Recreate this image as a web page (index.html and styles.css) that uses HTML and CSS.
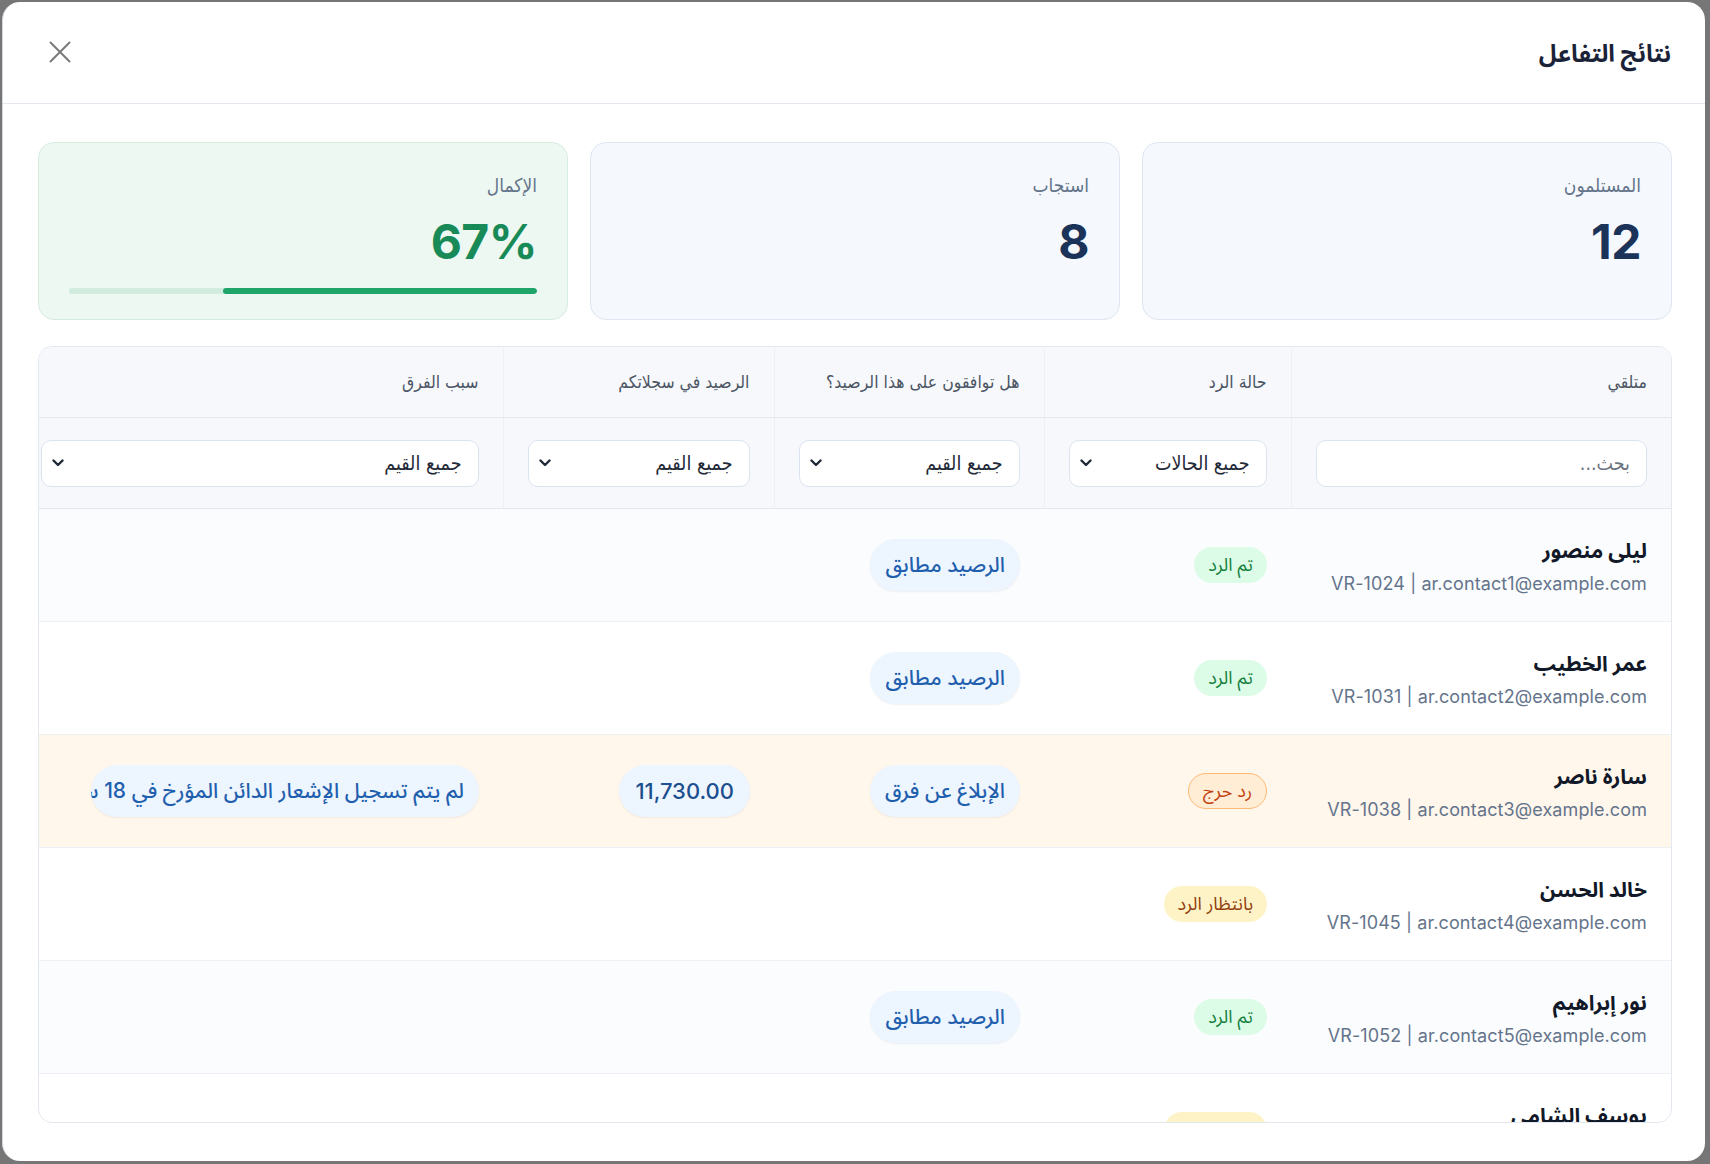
FILE: index.html
```html
<!DOCTYPE html>
<html lang="ar" dir="rtl">
<head>
<meta charset="utf-8">
<title>نتائج التفاعل</title>
<link rel="stylesheet" href="styles.css">
</head>
<body>
<div class="modal">
  <header class="modal-head">
    <h1 class="modal-title">نتائج التفاعل</h1>
    <button class="close" aria-label="إغلاق">
      <svg width="22" height="22" viewBox="0 0 22 22"><path d="M1.5 1.5L20.5 20.5M20.5 1.5L1.5 20.5" stroke="#7a7a7a" stroke-width="2" fill="none" stroke-linecap="round"/></svg>
    </button>
  </header>

  <section class="stats">
    <div class="stat">
      <div class="stat-label">المستلمون</div>
      <div class="stat-value">12</div>
    </div>
    <div class="stat">
      <div class="stat-label">استجاب</div>
      <div class="stat-value">8</div>
    </div>
    <div class="stat stat-green">
      <div class="stat-label">الإكمال</div>
      <div class="stat-value green">67%</div>
      <div class="bar"><div class="bar-fill" style="width:67%"></div></div>
    </div>
  </section>

  <section class="table-wrap">
    <table class="grid">
      <colgroup>
        <col class="c1"><col class="c2"><col class="c3"><col class="c4"><col class="c5">
      </colgroup>
      <thead>
        <tr class="head-row">
          <th>متلقي</th>
          <th>حالة الرد</th>
          <th>هل توافقون على هذا الرصيد؟</th>
          <th>الرصيد في سجلاتكم</th>
          <th class="last">سبب الفرق</th>
        </tr>
        <tr class="filter-row">
          <th><div class="field placeholder">بحث...</div></th>
          <th><div class="field select"><span>جميع الحالات</span><svg class="chev" width="12" height="8" viewBox="0 0 12 8"><path d="M1.5 1.5L6 6l4.5-4.5" stroke="#1f2937" stroke-width="2.4" fill="none" stroke-linecap="round" stroke-linejoin="round"/></svg></div></th>
          <th><div class="field select"><span>جميع القيم</span><svg class="chev" width="12" height="8" viewBox="0 0 12 8"><path d="M1.5 1.5L6 6l4.5-4.5" stroke="#1f2937" stroke-width="2.4" fill="none" stroke-linecap="round" stroke-linejoin="round"/></svg></div></th>
          <th><div class="field select"><span>جميع القيم</span><svg class="chev" width="12" height="8" viewBox="0 0 12 8"><path d="M1.5 1.5L6 6l4.5-4.5" stroke="#1f2937" stroke-width="2.4" fill="none" stroke-linecap="round" stroke-linejoin="round"/></svg></div></th>
          <th class="last"><div class="field select"><span>جميع القيم</span><svg class="chev" width="12" height="8" viewBox="0 0 12 8"><path d="M1.5 1.5L6 6l4.5-4.5" stroke="#1f2937" stroke-width="2.4" fill="none" stroke-linecap="round" stroke-linejoin="round"/></svg></div></th>
        </tr>
      </thead>
      <tbody>
        <tr class="row alt">
          <td class="who"><div class="name">ليلى منصور</div><div class="sub">VR-1024 | ar.contact1@example.com</div></td>
          <td><span class="badge ok">تم الرد</span></td>
          <td><span class="pill">الرصيد مطابق</span></td>
          <td></td>
          <td class="last"></td>
        </tr>
        <tr class="row">
          <td class="who"><div class="name">عمر الخطيب</div><div class="sub">VR-1031 | ar.contact2@example.com</div></td>
          <td><span class="badge ok">تم الرد</span></td>
          <td><span class="pill">الرصيد مطابق</span></td>
          <td></td>
          <td class="last"></td>
        </tr>
        <tr class="row warn">
          <td class="who"><div class="name">سارة ناصر</div><div class="sub">VR-1038 | ar.contact3@example.com</div></td>
          <td><span class="badge crit">رد حرج</span></td>
          <td><span class="pill">الإبلاغ عن فرق</span></td>
          <td><span class="pill num">11,730.00</span></td>
          <td class="last"><span class="pill reason">لم يتم تسجيل الإشعار الدائن المؤرخ في 18 سبتمبر 2024</span></td>
        </tr>
        <tr class="row">
          <td class="who"><div class="name">خالد الحسن</div><div class="sub">VR-1045 | ar.contact4@example.com</div></td>
          <td><span class="badge wait">بانتظار الرد</span></td>
          <td></td>
          <td></td>
          <td class="last"></td>
        </tr>
        <tr class="row alt">
          <td class="who"><div class="name">نور إبراهيم</div><div class="sub">VR-1052 | ar.contact5@example.com</div></td>
          <td><span class="badge ok">تم الرد</span></td>
          <td><span class="pill">الرصيد مطابق</span></td>
          <td></td>
          <td class="last"></td>
        </tr>
        <tr class="row">
          <td class="who"><div class="name">يوسف الشامي</div><div class="sub">VR-1059 | ar.contact6@example.com</div></td>
          <td><span class="badge wait">بانتظار الرد</span></td>
          <td></td>
          <td></td>
          <td class="last"></td>
        </tr>
      </tbody>
    </table>
  </section>
</div>
</body>
</html>
```

FILE: styles.css
```css
* { box-sizing: border-box; }
html, body { margin: 0; padding: 0; }
body {
  width: 1710px;
  height: 1164px;
  background: #767676;
  font-family: "Inter", "Noto Sans Arabic", "DejaVu Sans", sans-serif;
  overflow: hidden;
  padding: 2px 5px 3px 2px;
}
.modal {
  width: 1703px;
  height: 1159px;
  background: #ffffff;
  border-radius: 18px;
  border-left: 1px solid #d3d8df;
  overflow: hidden;
  display: flex;
  flex-direction: column;
}
.modal-head {
  height: 102px;
  flex: none;
  display: flex;
  align-items: center;
  justify-content: space-between;
  padding: 4px 34px 0 46px;
  border-bottom: 1px solid #e3e8ef;
}
.modal-title {
  margin: 0;
  font-size: 24px;
  font-weight: 700;
  color: #1a2238;
}
.close {
  border: 0;
  background: none;
  padding: 0;
  width: 22px;
  height: 22px;
  margin-top: -6px;
  display: flex;
}
.stats {
  display: grid;
  grid-template-columns: repeat(3, 530px);
  gap: 22px;
  margin: 38px 33px 0 35px;
  flex: none;
}
.stat {
  height: 178px;
  background: #f5f8fd;
  border: 1.5px solid #dfe6f1;
  border-radius: 16px;
  padding: 30px 30px 0 30px;
}
.stat-green {
  background: #eef8f2;
  border-color: #d5ecdf;
}
.stat-label {
  font-family: "DejaVu Sans Condensed", "DejaVu Sans", sans-serif;
  font-size: 19px;
  line-height: 24px;
  color: #64748b;
}
.stat-value {
  margin-top: 21px;
  font-size: 48px;
  line-height: 48px;
  font-weight: 700;
  color: #1b3358;
  letter-spacing: -0.5px;
}
.stat-value.green { color: #178a58; }
.bar {
  margin-top: 22px;
  height: 6px;
  border-radius: 3px;
  background: #d2ebdf;
  overflow: hidden;
}
.bar-fill {
  height: 100%;
  background: #1fa56a;
  border-radius: 3px;
}
.table-wrap {
  margin: 26px 33px 0 35px;
  height: 777px;
  flex: none;
  border: 1px solid #e3e8ef;
  border-radius: 14px;
  overflow: hidden;
}
.grid {
  width: 100%;
  border-collapse: collapse;
  table-layout: fixed;
}
.c1 { width: 380px; }
.c2 { width: 247px; }
.c3 { width: 270px; }
.c4 { width: 271px; }
.c5 { width: 464px; }
.grid th, .grid td {
  text-align: right;
  padding: 0 24px;
}
.grid th { border-left: 1px solid #edf0f5; }
.grid .last { border-left: 0; padding-left: 2px; }
.head-row th {
  height: 70px;
  background: #f6f8fc;
  font-family: "DejaVu Sans Condensed", "DejaVu Sans", sans-serif;
  font-size: 17.5px;
  font-weight: 400;
  color: #4b5563;
  border-bottom: 1px solid #e3e8ef;
}
.filter-row th {
  height: 91px;
  background: #f6f8fc;
  padding-top: 1px;
  border-bottom: 1px solid #e3e8ef;
}
.field {
  height: 47px;
  background: #ffffff;
  border: 1.5px solid #dbe3ef;
  border-radius: 10px;
  display: flex;
  align-items: center;
  justify-content: space-between;
  padding: 0 16px 0 10px;
  font-family: "DejaVu Sans Condensed", "DejaVu Sans", sans-serif;
  font-size: 19.5px;
  font-weight: 400;
  color: #1f2937;
}
.field.placeholder { color: #6b7280; }
.chev { flex: none; }
.row td {
  height: 113px;
  border-bottom: 1px solid #edf0f5;
  vertical-align: middle;
}
.row td.who { padding-top: 5px; }
.row.alt td { background: #fbfcfe; }
.row.warn td { background: #fff6ec; }
.name {
  font-size: 21px;
  line-height: 28px;
  font-weight: 700;
  color: #111827;
}
.sub {
  margin-top: 6px;
  font-size: 18px;
  line-height: 26px;
  color: #64748b;
  direction: ltr;
  text-align: right;
  letter-spacing: 0.1px;
}
.badge {
  display: inline-flex;
  align-items: center;
  height: 36px;
  padding: 0 14px;
  border-radius: 18px;
  font-size: 18px;
  white-space: nowrap;
}
.badge.ok { background: #dcfce7; color: #15803d; }
.badge.crit { background: #ffedd5; color: #c2410c; border: 1.5px solid #fdba74; }
.badge.wait { background: #fef3c7; color: #92400e; }
.pill {
  display: inline-flex;
  align-items: center;
  height: 52px;
  padding: 0 15px;
  border-radius: 26px;
  background: #edf5ff;
  color: #1f5fae;
  font-size: 21px;
  font-weight: 500;
  white-space: nowrap;
  box-shadow: 0 1px 2px rgba(15, 23, 42, 0.06);
}
.pill.num {
  font-size: 22px;
  color: #1c4f8f;
  padding: 0 16px;
}
.pill.reason {
  width: 388px;
  overflow: hidden;
  justify-content: flex-start;
}
```
